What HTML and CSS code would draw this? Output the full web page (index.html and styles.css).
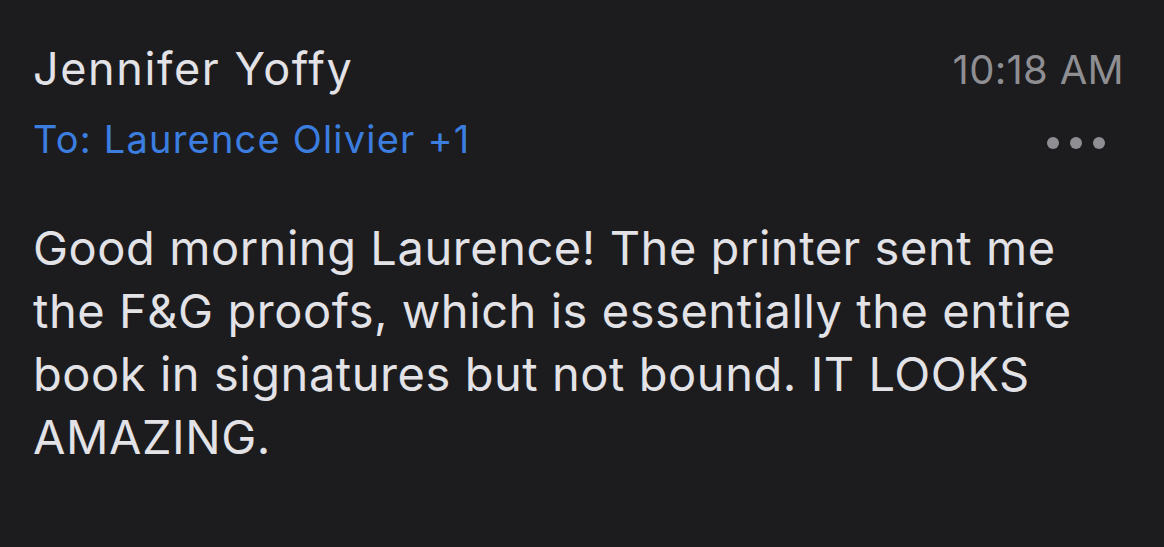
FILE: index.html
```html
<!DOCTYPE html>
<html lang="en">

<head>
    <meta charset="UTF-8">
    <meta name="viewport" content="width=device-width, initial-scale=1.0">
    <title>Message</title>
    <link rel="stylesheet" href="styles.css">
</head>

<body>
    <div class="message">
        <div class="header">
            <div class="sender">
                <div class="from">Jennifer Yoffy</div>
                <div class="to">To: Laurence Olivier +1</div>
            </div>
            <div class="meta">
                <div class="time">10:18 AM</div>
                <div class="more">
                    <span class="dot"></span>
                    <span class="dot"></span>
                    <span class="dot"></span>
                </div>
            </div>
        </div>
        <div class="body">
            Good morning Laurence! The printer sent me the F&amp;G proofs, which is essentially the entire book in signatures but not bound. IT LOOKS AMAZING.
        </div>
    </div>
</body>

</html>
```

FILE: styles.css
```css
body {
    font-family: Inter, "Noto Sans", sans-serif;
    background-color: #1c1c1e;
    color: #e2e2e7;
    margin: 0;
    padding: 0;
}

.message {
    padding: 40px 40px 0 33px;
}

.header {
    display: flex;
    justify-content: space-between;
    align-items: flex-start;
}

.from {
    font-size: 45px;
    line-height: 58px;
    letter-spacing: 1.6px;
    color: #e2e2e7;
}

.to {
    margin-top: 18px;
    font-size: 38px;
    line-height: 46px;
    letter-spacing: 1.2px;
    color: #3b7ee0;
}

.meta {
    display: flex;
    flex-direction: column;
    align-items: flex-end;
}

.time {
    font-size: 40px;
    line-height: 60px;
    letter-spacing: 0.3px;
    color: #8e8e93;
}

.more {
    display: flex;
    gap: 11px;
    padding: 37px 19px 0 0;
}

.dot {
    width: 12px;
    height: 12px;
    border-radius: 50%;
    background-color: #8e8e93;
}

.body {
    margin-top: 54px;
    font-size: 47px;
    line-height: 63px;
    letter-spacing: 0.55px;
    max-width: 1070px;
}
```
